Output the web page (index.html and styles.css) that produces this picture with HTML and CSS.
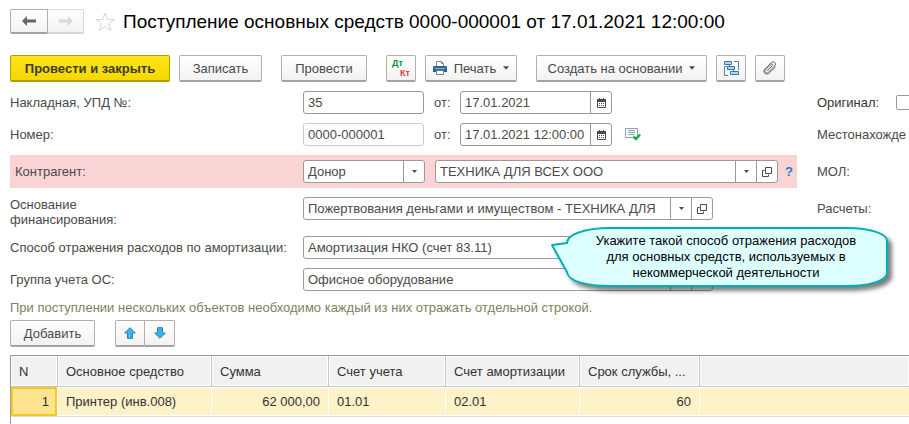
FILE: index.html
```html
<!DOCTYPE html>
<html lang="ru">
<head>
  <meta charset="UTF-8">
  <meta name="viewport" content="width=device-width, initial-scale=1">
  <title>Поступление основных средств</title>
  <link rel="stylesheet" href="styles.css">
</head>
<body>
  <!-- shared icons -->
  <svg class="sprite" aria-hidden="true">
    <symbol id="caret" viewBox="0 0 7 4"><path d="M0 0h7L3.5 4z" fill="#4a4a4a"/></symbol>
    <symbol id="open" viewBox="0 0 10 10"><path d="M3.5 .5h6v6h-6zM2.500 3.500h-2v6h6v-2" fill="none" stroke="#4a4a4a"/></symbol>
    <symbol id="calendar" viewBox="0 0 9 10">
      <path d="M.5 1.500h8v8h-8z" fill="#fff" stroke="#4a4a4a"/>
      <path d="M0 1h9v3H0zM2 0h1v2H2zM6 0h1v2H6zM2 5h1v1H2zM4 5h1v1H4zM6 5h1v1H6zM2 7h1v1H2zM4 7h1v1H4zM6 7h1v1H6z" fill="#4a4a4a"/>
    </symbol>
    <symbol id="arrow" viewBox="0 0 12 12"><path d="M6 .7l5.300 5.300H8.500v5.300h-5V6H.7z" fill="#3fb2ee" stroke="#2a7fb5"/></symbol>
  </svg>

  <header class="titlebar">
    <nav class="group">
      <button class="btn nav" aria-label="Назад"><svg width="14" height="10" viewBox="0 0 14 10"><path d="M0 5l5-5v3.500h9v3H5V10z" fill="#666"/></svg></button>
      <button class="btn nav nav-off" aria-label="Вперед"><svg width="14" height="10" viewBox="0 0 14 10"><path d="M14 5L9 0v3.500H0v3h9V10z" fill="#d8d8d8"/></svg></button>
    </nav>
    <button class="star" aria-label="В избранное"><svg width="20" height="20" viewBox="0 0 20 20"><path d="M10 1l2.300 6.500h6.900l-5.500 4.200 2 6.800L10 14.500l-5.700 4 2-6.800L.8 7.500h6.900z" fill="#fff" stroke="#d4d4d4"/></svg></button>
    <h1>Поступление основных средств 0000-000001 от 17.01.2021 12:00:00</h1>
  </header>

  <div class="toolbar">
    <button class="btn btn-main">Провести и закрыть</button>
    <button class="btn btn-save">Записать</button>
    <button class="btn btn-post">Провести</button>
    <button class="btn btn-icon btn-dtkt"><span class="dt">Дт</span><span class="kt">Кт</span></button>
    <button class="btn btn-print">
      <svg width="14" height="14" viewBox="0 0 14 14">
        <path d="M3.500 6V.5h5l2 2V6" fill="#fff" stroke="#7d8b95"/>
        <path d="M8.500 .5v2h2" fill="none" stroke="#7d8b95"/>
        <path d="M1 5h12l1 1v5H0V6z" fill="#2f6690"/>
        <path d="M2 7h10v1H2z" fill="#8fb5d0"/>
        <path d="M3.500 9.500h7v4h-7z" fill="#fff" stroke="#5f7f96"/>
      </svg>
      Печать
      <svg class="caret" width="6" height="4"><use href="#caret"/></svg>
    </button>
    <button class="btn btn-create">Создать на основании <svg class="caret" width="6" height="4"><use href="#caret"/></svg></button>
    <button class="btn btn-icon btn-links" aria-label="Структура подчиненности">
      <svg width="15" height="15" viewBox="0 0 15 15">
        <path d="M3 5.500H.5v9H4M10 .5h4.500V9M5.500 4v2M9.500 9v2" fill="none" stroke="#4c86b3"/>
        <path d="M.5 .5h7v3h-7zM3.500 5.500h7v3h-7zM6.500 10.500h8v3h-8z" fill="#b5d3ea" stroke="#3d76a3"/>
      </svg>
    </button>
    <button class="btn btn-icon btn-clip" aria-label="Присоединенные файлы">
      <svg width="14" height="14" viewBox="0 0 14 14"><path d="M4.500 9.500L9.500 4.500c.9-.9-.4-2.200-1.300-1.300L2.600 8.800c-2 2 .6 4.600 2.600 2.600L11.500 5c2.700-2.700-.9-5.600-3.300-3.300L2 7.800c-3.200 3.200 1 7.200 4.200 4.200L12.500 6" fill="none" stroke="#666" stroke-linecap="round"/></svg>
    </button>
  </div>

  <main>
    <form class="form">
      <div class="row">
        <div class="main">
          <label class="name" for="invoice">Накладная, УПД №:</label>
          <div class="field short"><input id="invoice" value="35"></div>
          <label class="from" for="invoice-date">от:</label>
          <div class="field date"><input id="invoice-date" value="17.01.2021"><button type="button" aria-label="Выбрать дату"><svg width="9" height="10"><use href="#calendar"/></svg></button></div>
        </div>
        <label class="side side-dark" for="original">Оригинал:</label>
        <input type="checkbox" id="original">
      </div>

      <div class="row">
        <div class="main">
          <label class="name" for="number">Номер:</label>
          <div class="field short pale"><input id="number" value="0000-000001"></div>
          <label class="from" for="number-date">от:</label>
          <div class="field date"><input id="number-date" value="17.01.2021 12:00:00"><button type="button" aria-label="Выбрать дату"><svg width="9" height="10"><use href="#calendar"/></svg></button></div>
          <svg class="posted" width="16" height="13" viewBox="0 0 16 13">
            <path d="M.5 .5h12v9H.5z" fill="#fff" stroke="#8aa4b5"/>
            <path d="M3 2.500h7M3 4.500h7M3 6.500h6" stroke="#8aa4b5"/>
            <path d="M8.500 8.500l2.500 2.500 4-4.500" fill="none" stroke="#25a83c" stroke-width="2.500"/>
          </svg>
        </div>
        <span class="side">Местонахожде</span>
      </div>

      <div class="row">
        <div class="main marked">
          <label class="name" for="party-kind">Контрагент:</label>
          <div class="field kind">
            <select id="party-kind"><option>Донор</option></select>
            <span class="drop"><svg width="5" height="3"><use href="#caret"/></svg></span>
          </div>
          <div class="field party"><input aria-label="Контрагент" value="ТЕХНИКА ДЛЯ ВСЕХ ООО"><button type="button" aria-label="Выбрать"><svg width="5" height="3"><use href="#caret"/></svg></button><button type="button" aria-label="Открыть"><svg width="10" height="10"><use href="#open"/></svg></button></div>
          <a class="help" href="#">?</a>
        </div>
        <span class="side">МОЛ:</span>
      </div>

      <div class="row row-top">
        <div class="main">
          <label class="name" for="basis">Основание<br>финансирования:</label>
          <div class="field long"><input id="basis" value="Пожертвования деньгами и имуществом - ТЕХНИКА ДЛЯ"><button type="button" aria-label="Выбрать"><svg width="5" height="3"><use href="#caret"/></svg></button><button type="button" aria-label="Открыть"><svg width="10" height="10"><use href="#open"/></svg></button></div>
        </div>
        <span class="side">Расчеты:</span>
      </div>

      <div class="row">
        <div class="main">
          <label class="name" for="method">Способ отражения расходов по амортизации:</label>
          <div class="field long">
            <input id="method" value="Амортизация НКО (счет 83.11)"><button type="button" aria-label="Выбрать"><svg width="5" height="3"><use href="#caret"/></svg></button><button type="button" aria-label="Открыть"><svg width="10" height="10"><use href="#open"/></svg></button>
            <div class="callout">
              <svg width="338" height="61" viewBox="0 0 338 61"><path d="M1 18L16 16C16 8 32 1 60 1H296C320 1 336 7 336 14V47C334 54 318 59 296 59H60C34 59 17 54 16 45Z" fill="#dff" stroke="#00b0b9" stroke-width="2" stroke-linejoin="round"/></svg>
              <p>Укажите такой способ отражения расходов<br>для основных средств, используемых в<br>некоммерческой деятельности</p>
            </div>
          </div>
        </div>
      </div>

      <div class="row">
        <div class="main">
          <label class="name" for="group">Группа учета ОС:</label>
          <div class="field long"><input id="group" value="Офисное оборудование"><button type="button" aria-label="Выбрать"><svg width="5" height="3"><use href="#caret"/></svg></button><button type="button" aria-label="Открыть"><svg width="10" height="10"><use href="#open"/></svg></button></div>
        </div>
      </div>
    </form>

    <p class="hint">При поступлении нескольких объектов необходимо каждый из них отражать отдельной строкой.</p>

    <div class="table-bar">
      <button class="btn btn-add">Добавить</button>
      <div class="group">
        <button class="btn btn-icon" aria-label="Вверх"><svg width="12" height="12"><use href="#arrow"/></svg></button>
        <button class="btn btn-icon" aria-label="Вниз"><svg class="down" width="12" height="12"><use href="#arrow"/></svg></button>
      </div>
    </div>

    <div class="table-box">
      <table>
        <colgroup>
          <col class="c-n"><col class="c-name"><col class="c-sum"><col class="c-acc"><col class="c-amort"><col class="c-term"><col>
        </colgroup>
        <thead>
          <tr><th>N</th><th>Основное средство</th><th>Сумма</th><th>Счет учета</th><th>Счет амортизации</th><th>Срок службы, ...</th><th></th></tr>
        </thead>
        <tbody>
          <tr><td class="num current">1</td><td>Принтер (инв.008)</td><td class="num">62 000,00</td><td>01.01</td><td>02.01</td><td class="num">60</td><td></td></tr>
        </tbody>
      </table>
    </div>
  </main>
</body>
</html>
```

FILE: styles.css
```css
* { box-sizing: border-box; }

body {
  display: flex;
  flex-direction: column;
  margin: 0;
  padding: 9px 0 0 10px;
  min-height: 100vh;
  overflow-x: hidden;
  background: #fff;
  color: #4a4a4a;
  font: 13px/15px "Liberation Sans", Arial, sans-serif;
}
button, input, select { font: inherit; color: inherit; }
svg { display: block; flex: none; }
.sprite { position: absolute; width: 0; height: 0; }
main {
  display: flex;
  flex-direction: column;
  flex: 1;
}

/* Title */
.titlebar {
  display: flex;
  align-items: center;
  height: 25px;
}
h1 {
  margin: 0 0 0 8px;
  font-size: 19px;
  line-height: 24px;
  font-weight: normal;
  color: #000;
  white-space: nowrap;
}
.star {
  margin-left: 11px;
  padding: 0;
  border: 0;
  background: none;
}

/* Buttons */
.btn {
  display: flex;
  align-items: center;
  justify-content: center;
  flex: none;
  height: 27px;
  padding: 0;
  border: 1px solid #b0b0b0;
  border-bottom: 2px solid #a3a3a3;
  border-radius: 2px;
  background: linear-gradient(#fff, #f2f2f2);
  white-space: nowrap;
}
.group { display: flex; }
.group .btn:first-child { border-radius: 2px 0 0 2px; }
.group .btn:last-child { border-left: 0; border-radius: 0 2px 2px 0; }
.nav { width: 38px; height: 25px; }
.nav-off { width: 36px; border-color: #d8d8d8; }
.btn-icon { width: 30px; }

.toolbar {
  display: flex;
  gap: 9px;
  margin-top: 21px;
}
.btn-main {
  width: 160px;
  border-color: #b39b00;
  background: linear-gradient(#ffe51a, #f5d800);
  font-weight: bold;
  color: #3f3a1c;
}
.btn-save { width: 83px; }
.btn-post { width: 86px; margin-left: 10px; }
.btn-dtkt {
  flex-direction: column;
  align-items: stretch;
  margin-left: 10px;
  padding: 0 5px;
  font: bold 9px/10px "Liberation Sans", Arial, sans-serif;
}
.dt { color: #009640; text-align: left; }
.kt { color: #e0403a; text-align: right; }
.btn-print { width: 92px; gap: 7px; }
.btn-create { width: 171px; gap: 7px; margin-left: 10px; }

/* Form */
.form {
  display: flex;
  flex-direction: column;
  gap: 9px;
  margin-top: 9px;
}
.row { display: flex; align-items: center; }
.row-top, .row-top .main { align-items: flex-start; }
.row-top .side { margin-top: 4px; }
.main {
  display: flex;
  align-items: center;
  flex: none;
  width: 787px;
}
.name { flex: none; width: 293px; white-space: nowrap; }
.marked {
  height: 33px;
  background: #fad4d4;
}
.marked .name { padding-left: 5px; }
.side {
  flex: none;
  margin-left: 20px;
  white-space: nowrap;
}
.side-dark { color: #333; }
.from { width: 36px; padding-left: 10px; }

.field {
  display: flex;
  position: relative;
  height: 23px;
  border: 1px solid #999;
  border-radius: 3px;
  background: #fff;
}
.field input {
  flex: 1;
  min-width: 0;
  padding: 0 0 0 4px;
  border: 0;
  background: none;
  outline: 0;
}
.field button, .drop {
  display: flex;
  align-items: center;
  justify-content: center;
  flex: none;
  width: 21px;
  padding: 0;
  border: 0;
  border-left: 1px solid #999;
  background: none;
}
.short { width: 121px; }
.pale { border-color: #ccc; }
.date { width: 152px; }
.long { width: 410px; }
.party { width: 343px; margin-left: 10px; }
.kind {
  display: grid;
  grid-template-columns: 1fr 21px;
  width: 122px;
}
.kind select {
  grid-area: 1 / 1 / 2 / 3;
  appearance: none;
  padding: 0 0 0 4px;
  border: 0;
  background: none;
}
.drop { grid-area: 1 / 2; pointer-events: none; }
.posted { margin-left: 13px; }
.help {
  margin-left: 7px;
  color: #1a7fc4;
  font-weight: bold;
  text-decoration: none;
}
input[type=checkbox] {
  appearance: none;
  flex: none;
  width: 15px;
  height: 15px;
  margin: 0 0 0 17px;
  border: 1px solid #999;
  border-radius: 2px;
}

/* Callout over the fields */
.callout {
  position: absolute;
  left: 247px;
  top: -10px;
  z-index: 1;
  width: 338px;
  color: #000;
}
.callout svg {
  overflow: visible;
  filter: drop-shadow(4px 4px 2px rgba(0,0,0,0.5));
}
.callout p {
  position: absolute;
  inset: 6px 0 0 12px;
  margin: 0;
  line-height: 16px;
  text-align: center;
  white-space: nowrap;
}

/* Table */
.hint {
  margin: 9px 0 5px;
  color: #808060;
}
.table-bar { display: flex; gap: 20px; }
.btn-add { width: 85px; }
.down { transform: rotate(180deg); }

.table-box {
  flex: 1;
  margin-top: 8px;
  border-top: 1px solid #999;
  border-left: 1px solid #999;
}
table {
  width: 100%;
  border-collapse: separate;
  border-spacing: 0;
  table-layout: fixed;
  color: #333;
}
.c-n { width: 47px; }
.c-name { width: 154px; }
.c-sum, .c-acc { width: 117px; }
.c-amort { width: 134px; }
.c-term { width: 120px; }
th, td {
  padding: 0 8px;
  text-align: left;
  font-weight: normal;
  white-space: nowrap;
}
th {
  height: 31px;
  border-right: 1px solid #c4c4c4;
  border-bottom: 1px solid #c4c4c4;
  background: #f1f1f1;
  box-shadow: inset 0 0 0 1px #fff;
}
td {
  height: 30px;
  border-right: 1px solid #fff;
  border-bottom: 1px solid #ddd;
  background: #fdf2c8;
  box-shadow: inset 0 1px #fff, inset 0 -1px #fff;
}
th:last-child, td:last-child { border-right: 0; }
.num { text-align: right; }
.current {
  background: #ffe48f;
  box-shadow: inset 0 0 0 2px #f8c822;
}
```
